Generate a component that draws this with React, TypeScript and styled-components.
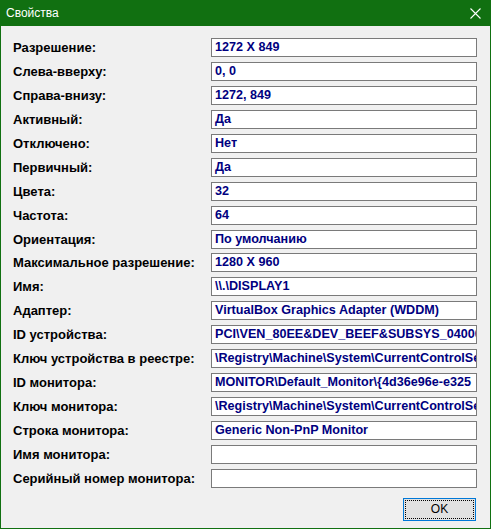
import React from 'react';
import styled, { createGlobalStyle } from 'styled-components';

const GlobalStyle = createGlobalStyle`
  html, body {
    margin: 0;
    padding: 0;
    background: #f0f0f0;
  }
`;

const ROWS: [string, string][] = [
  ['Разрешение:', '1272 X 849'],
  ['Слева-вверху:', '0, 0'],
  ['Справа-внизу:', '1272, 849'],
  ['Активный:', 'Да'],
  ['Отключено:', 'Нет'],
  ['Первичный:', 'Да'],
  ['Цвета:', '32'],
  ['Частота:', '64'],
  ['Ориентация:', 'По умолчанию'],
  ['Максимальное разрешение:', '1280 X 960'],
  ['Имя:', '\\\\.\\DISPLAY1'],
  ['Адаптер:', 'VirtualBox Graphics Adapter (WDDM)'],
  ['ID устройства:', 'PCI\\VEN_80EE&DEV_BEEF&SUBSYS_040000000'],
  [
    'Ключ устройства в реестре:',
    '\\Registry\\Machine\\System\\CurrentControlSet\\Control',
  ],
  ['ID монитора:', 'MONITOR\\Default_Monitor\\{4d36e96e-e325'],
  [
    'Ключ монитора:',
    '\\Registry\\Machine\\System\\CurrentControlSet\\Control',
  ],
  ['Строка монитора:', 'Generic Non-PnP Monitor'],
  ['Имя монитора:', ''],
  ['Серийный номер монитора:', ''],
];

const Window = styled.div`
  box-sizing: border-box;
  width: 491px;
  height: 529px;
  border: 1px solid #117011;
  border-top: none;
  background: #f0f0f0;
  display: flex;
  flex-direction: column;
`;

const TitleBar = styled.div`
  height: 26px;
  margin: 0 -1px;
  background: #117011;
  color: #fff;
  display: flex;
  align-items: center;
  justify-content: space-between;
  padding: 0 10px 0 6px;
  font-family: 'Liberation Sans', Arial, sans-serif;
  font-size: 12px;
`;

const CloseIcon = styled.svg`
  width: 11px;
  height: 11px;
`;

const Body = styled.div`
  flex: 1;
  display: flex;
  flex-direction: column;
  padding: 12px 13px 0 12px;
`;

const Grid = styled.div`
  display: grid;
  grid-template-columns: 198px 266px;
  grid-auto-rows: 19px;
  row-gap: 4.94px;
`;

const Label = styled.div`
  display: flex;
  align-items: center;
  font-family: 'Liberation Sans', Arial, sans-serif;
  font-weight: bold;
  font-size: 13px;
  color: #000;
  white-space: nowrap;
`;

const Field = styled.div`
  box-sizing: border-box;
  border: 1px solid #7a7a7a;
  background: #fff;
  color: #000080;
  font-family: 'Liberation Sans', Arial, sans-serif;
  font-weight: bold;
  font-size: 12.6px;
  line-height: 17px;
  padding-left: 3px;
  white-space: nowrap;
  overflow: hidden;
`;

const Footer = styled.div`
  display: flex;
  justify-content: flex-end;
  margin-top: 10px;
  padding-right: 1px;
`;

const OkButton = styled.button`
  box-sizing: border-box;
  width: 73px;
  height: 23px;
  border: 1px solid #0078d7;
  background: #e1e1e1;
  padding: 1px;
  font-family: 'Liberation Sans', Arial, sans-serif;
  font-size: 12px;
  color: #000;
`;

const FocusRing = styled.span`
  box-sizing: border-box;
  display: flex;
  align-items: center;
  justify-content: center;
  width: 100%;
  height: 100%;
  border: 1px dotted #000;
`;

export default function App(): JSX.Element {
  return (
    <>
      <GlobalStyle />
      <Window>
        <TitleBar>
          <span>Свойства</span>
          <CloseIcon viewBox="0 0 11 11">
            <path d="M0.5 0.5 L10.5 10.5 M10.5 0.5 L0.5 10.5" stroke="#fff" strokeWidth="1.1" />
          </CloseIcon>
        </TitleBar>
        <Body>
          <Grid>
            {ROWS.map(([label, value]) => (
              <React.Fragment key={label}>
                <Label>{label}</Label>
                <Field>{value}</Field>
              </React.Fragment>
            ))}
          </Grid>
          <Footer>
            <OkButton>
              <FocusRing>OK</FocusRing>
            </OkButton>
          </Footer>
        </Body>
      </Window>
    </>
  );
}
